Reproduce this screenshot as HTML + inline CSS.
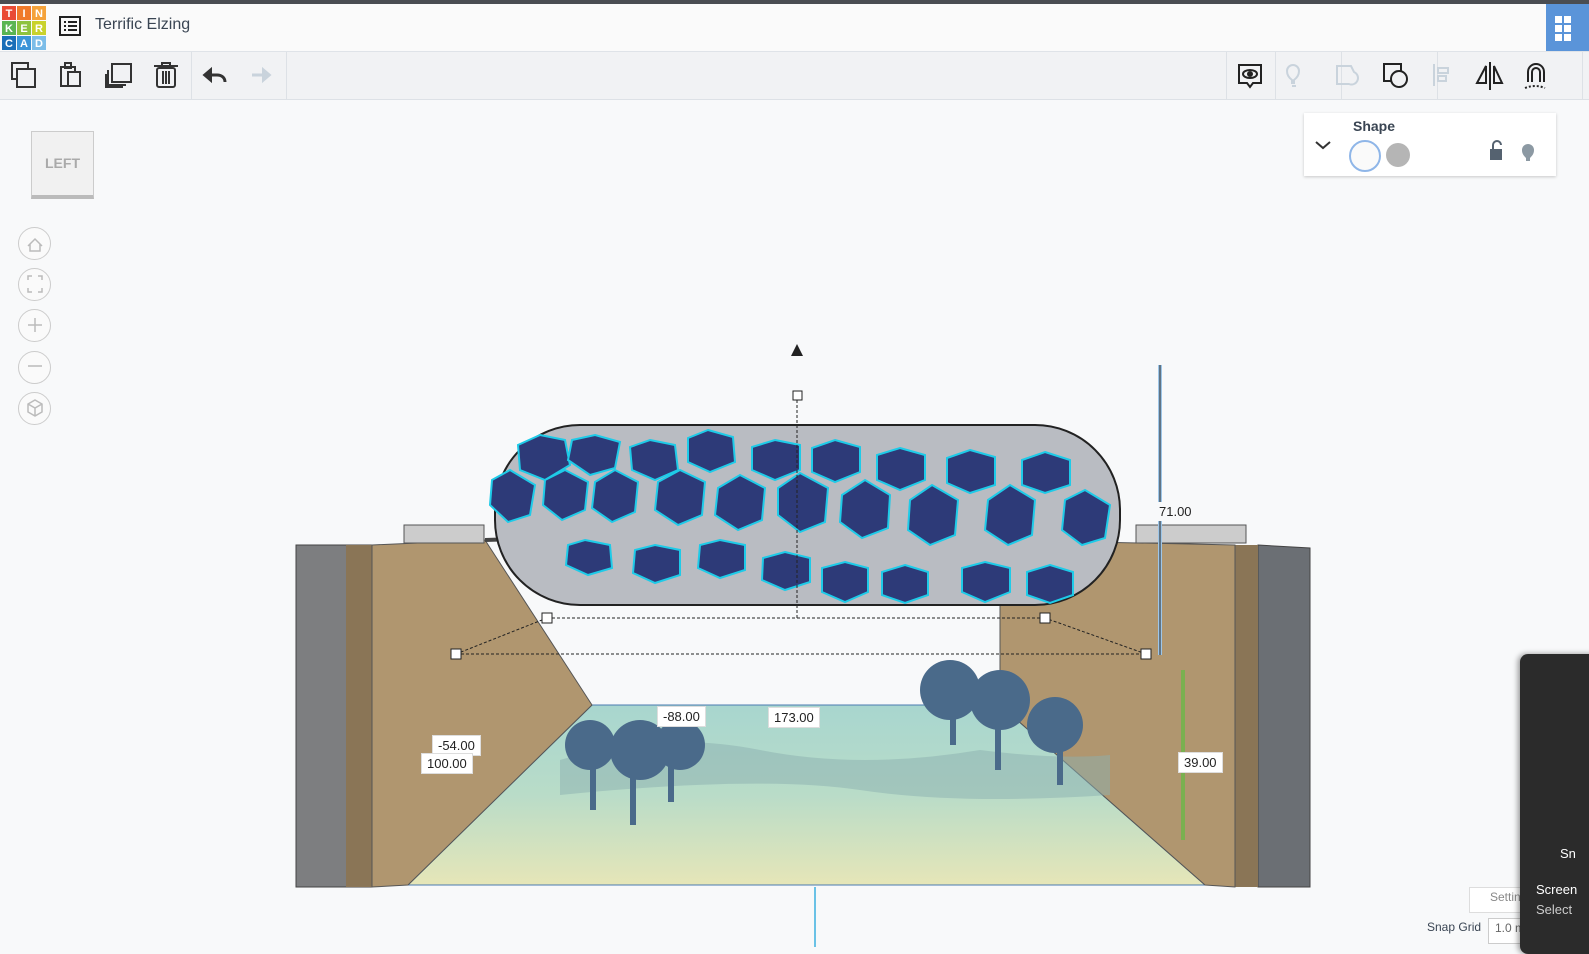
<!DOCTYPE html>
<html><head><meta charset="utf-8"><style>
body{margin:0;width:1589px;height:947px;overflow:hidden;background:#f8f9fa;font-family:"Liberation Sans",sans-serif;position:relative}
.top{position:absolute;left:0;top:0;width:1589px;height:4px;background:#4a4d52}
.hdr{position:absolute;top:4px;left:0;width:1589px;height:47px;background:#fafafa;border-bottom:2px solid #dfe3e8}
.tb{position:absolute;top:52px;left:0;width:1589px;height:47px;background:#f1f2f4;border-bottom:1px solid #dde1e6}
.sep{position:absolute;top:52px;width:1px;height:47px;background:#dde1e6}
.lbl{position:absolute;background:#fff;border:1px solid #ddd;font-size:13px;color:#222;padding:2px 5px}
.nav{position:absolute;left:18px;width:31px;height:31px;border:1.5px solid #ccc;border-radius:50%;background:#fafafa}
</style></head><body>
<div class="top"></div>
<div class="hdr"></div>
<svg style="position:absolute;left:2px;top:6px" width="44" height="44">
<rect x="0" y="0" width="14" height="14" fill="#e94b35"/><rect x="15" y="0" width="14" height="14" fill="#f07a2a"/><rect x="30" y="0" width="14" height="14" fill="#f5a23a"/>
<rect x="0" y="15" width="14" height="14" fill="#5ab552"/><rect x="15" y="15" width="14" height="14" fill="#8ec33f"/><rect x="30" y="15" width="14" height="14" fill="#c9d22c"/>
<rect x="0" y="30" width="14" height="14" fill="#1a6fb8"/><rect x="15" y="30" width="14" height="14" fill="#3b95d8"/><rect x="30" y="30" width="14" height="14" fill="#7cbde8"/>
<g font-size="11" fill="#fff" font-weight="bold" text-anchor="middle"><text x="7" y="11">T</text><text x="22" y="11">I</text><text x="37" y="11">N</text><text x="7" y="26">K</text><text x="22" y="26">E</text><text x="37" y="26">R</text><text x="7" y="41">C</text><text x="22" y="41">A</text><text x="37" y="41">D</text></g></svg>
<svg style="position:absolute;left:59px;top:16px" width="22" height="20"><rect x="1" y="1" width="20" height="18" fill="none" stroke="#222" stroke-width="2"/><g stroke="#222" stroke-width="2"><line x1="5" y1="6" x2="7" y2="6"/><line x1="9" y1="6" x2="18" y2="6"/><line x1="5" y1="10" x2="7" y2="10"/><line x1="9" y1="10" x2="18" y2="10"/><line x1="5" y1="14" x2="7" y2="14"/><line x1="9" y1="14" x2="18" y2="14"/></g></svg>
<div style="position:absolute;left:95px;top:16px;font-size:16px;color:#3a4553">Terrific Elzing</div>
<div style="position:absolute;left:1546px;top:4px;width:43px;height:47px;background:#5a94d9"></div>
<svg style="position:absolute;left:1555px;top:16px" width="34" height="26" fill="#fff"><rect x="0" y="0" width="7" height="7"/><rect x="9" y="0" width="7" height="7"/><rect x="0" y="9" width="7" height="7"/><rect x="9" y="9" width="7" height="7"/><rect x="0" y="18" width="7" height="7"/><rect x="9" y="18" width="7" height="7"/></svg>
<div class="tb"></div>
<div class="sep" style="left:191px"></div><div class="sep" style="left:286px"></div>
<div class="sep" style="left:1226px"></div><div class="sep" style="left:1275px"></div><div class="sep" style="left:1341px"></div><div class="sep" style="left:1437px"></div><div class="sep" style="left:1582px"></div>
<svg style="position:absolute;left:0;top:52px" width="300" height="47" fill="none" stroke="#333" stroke-width="2">
<rect x="12" y="11" width="16" height="16"/><rect x="17" y="17" width="18" height="18" fill="#f1f2f4"/>
<rect x="61" y="15" width="14" height="19"/><rect x="68" y="20" width="12" height="14" fill="#f1f2f4"/><rect x="65" y="11" width="6" height="5"/>
<rect x="112" y="12" width="19" height="18"/><path d="M108 18v15h18M106 22v13h17"/>
<rect x="157" y="16" width="18" height="19" rx="2"/><path d="M154 14h24M162 14v-3h8v3M163 19v13M166 19v13M169 19v13"/>
<path d="M206 23h11c5 0 8 3 8 7" stroke-width="3"/><path d="M204 23l7-6v12z" fill="#333"/>
<path d="M263 23h-11" stroke="#c9d3dc" stroke-width="3"/><path d="M270 23l-7-6v12z" fill="#c9d3dc" stroke="#c9d3dc"/>
</svg>
<svg style="position:absolute;left:1226px;top:52px" width="363" height="47" fill="none" stroke="#222" stroke-width="2">
<path d="M13 13h22v18h-8l-3 4-3-4h-8z"/><ellipse cx="24" cy="22" rx="7" ry="4"/><circle cx="24" cy="22" r="2" fill="#222"/>
<path d="M66 31v-3c-4-3-5-6-5-9a6 6 0 0 1 12 0c0 3-1 6-5 9v3zM66 34h4" stroke="#c9d3dc"/>
<path d="M111 14h14l3 6a6 6 0 0 1-5 12h-12z" stroke="#c9d3dc"/>
<rect x="158" y="12" width="17" height="17"/><circle cx="173" cy="27" r="8" fill="#f1f2f4"/>
<path d="M208 12v22M212 16h10v5h-10zM212 24h8v5h-8z" stroke="#c9d3dc"/>
<path d="M264 10v28M260 14l-9 17h9zM268 14l8 17h-8z"/>
<path d="M302 30v-10a8 8 0 0 1 16 0v10M306 30v-10a4 4 0 0 1 8 0v10"/><path d="M299 36q10-4 20 0" stroke-dasharray="2 2"/>
</svg>
<div style="position:absolute;left:1304px;top:113px;width:252px;height:63px;background:#fff;box-shadow:0 1px 3px rgba(0,0,0,.2)"></div>
<div style="position:absolute;left:1353px;top:118px;font-size:14px;color:#3a4553;font-weight:bold">Shape</div>
<svg style="position:absolute;left:1310px;top:135px" width="240" height="40"><path d="M6 7l7 6 7-6" fill="none" stroke="#333" stroke-width="2"/>
<circle cx="55" cy="21" r="15" fill="#fafafa" stroke="#8fb6e8" stroke-width="2"/><circle cx="88" cy="20" r="12" fill="#b5b5b5"/>
<rect x="180" y="14" width="12" height="11" fill="#556270"/><path d="M183 14v-4a4 4 0 0 1 8 0" fill="none" stroke="#556270" stroke-width="2"/>
<path d="M216 23c-3-3-4-5-4-8a6 6 0 0 1 12 0c0 3-1 5-4 8v3h-4z" fill="#8c99a3"/></svg>
<div style="position:absolute;left:31px;top:131px;width:61px;height:63px;background:#f1f1f1;border:1px solid #ccc;border-bottom:4px solid #bbb;font-size:14px;color:#aaa;text-align:center;line-height:62px;font-weight:bold">LEFT</div>
<div class="nav" style="top:227px"></div><div class="nav" style="top:268px"></div><div class="nav" style="top:309px"></div><div class="nav" style="top:351px"></div><div class="nav" style="top:392px"></div>
<svg style="position:absolute;left:18px;top:227px" width="34" height="200" fill="none" stroke="#bbb" stroke-width="1.5">
<path d="M10 19l7-7 7 7M12 17v7h10v-7"/><path d="M10 53v-4h4M24 53v-4h-4M10 61v4h4M24 61v4h-4"/><path d="M10 98h14M17 91v14"/><path d="M10 139h14"/><path d="M17 173l7 4v8l-7 4-7-4v-8zM10 177l7 4 7-4M17 181v8"/></svg>
<svg style="position:absolute;left:0;top:0" width="1589" height="947">
<defs><linearGradient id="fl" x1="0" y1="0" x2="0" y2="1"><stop offset="0" stop-color="#a8d6cf"/><stop offset=".5" stop-color="#b9dcc8"/><stop offset="1" stop-color="#e6e6b8"/></linearGradient></defs>
<polygon points="296,545 372,545 372,887 296,887" fill="#7d7e80" stroke="#444"/>
<polygon points="346,545 372,545 372,887 346,887" fill="#8a7556"/>
<polygon points="408,885 592,705 1000,705 1205,885" fill="url(#fl)" stroke="#4a7ab0"/>
<polygon points="372,545 485,540 592,705 408,885 372,887" fill="#b0966f" stroke="#555"/>
<polygon points="1258,545 1310,548 1310,887 1258,887" fill="#6b6f74" stroke="#444"/>
<polygon points="1235,545 1258,545 1258,887 1235,887" fill="#8a7556"/>
<polygon points="1000,540 1235,545 1235,887 1205,885 1000,705" fill="#b0966f" stroke="#555"/>
<path d="M560 760q100-30 200-10t220 0q80 10 130 5v40q-150 10-250-5t-300 5z" fill="#8bb0b0" opacity=".5"/>
<g fill="#4a6a8a"><circle cx="590" cy="745" r="25"/><circle cx="640" cy="750" r="30"/><circle cx="680" cy="745" r="25"/><circle cx="950" cy="690" r="30"/><circle cx="1000" cy="700" r="30"/><circle cx="1055" cy="725" r="28"/>
<rect x="590" y="760" width="6" height="50"/><rect x="630" y="760" width="6" height="65"/><rect x="668" y="760" width="6" height="42"/><rect x="950" y="700" width="6" height="45"/><rect x="995" y="710" width="6" height="60"/><rect x="1057" y="730" width="6" height="55"/></g>
<rect x="404" y="525" width="80" height="18" fill="#ccc" stroke="#555"/><rect x="1136" y="525" width="110" height="18" fill="#ccc" stroke="#555"/>
<path d="M485 540q300-10 620-5" stroke="#444" stroke-width="4" fill="none"/>
<rect x="495" y="425" width="625" height="180" rx="85" fill="#b9bcc2" stroke="#222" stroke-width="2"/>
<g fill="#2d3a78" stroke="#1ecbe8" stroke-width="2">
<polygon points="540,435 565,440 570,465 545,480 520,470 518,445"/><polygon points="595,435 620,442 615,468 590,475 568,460 572,440"/><polygon points="650,440 675,445 678,470 655,480 632,470 630,447"/><polygon points="708,430 733,437 735,462 710,472 688,462 688,438"/><polygon points="775,440 800,445 800,470 775,480 752,470 752,447"/><polygon points="835,440 860,447 860,472 835,482 812,472 812,448"/><polygon points="900,448 925,455 925,480 900,490 877,480 877,455"/><polygon points="970,450 995,457 995,485 970,493 947,483 947,458"/><polygon points="1045,452 1070,460 1070,485 1045,493 1022,485 1022,460"/>
<polygon points="510,470 535,485 530,515 508,522 490,505 492,480"/><polygon points="565,470 588,482 585,510 562,520 543,505 545,480"/><polygon points="615,470 638,482 635,512 612,522 592,508 595,482"/><polygon points="680,470 705,482 702,515 678,525 655,510 658,482"/><polygon points="740,475 765,488 762,520 738,530 715,515 718,488"/><polygon points="800,473 828,488 825,522 800,532 778,515 778,488"/><polygon points="865,480 890,495 888,528 862,538 840,522 842,495"/><polygon points="932,485 958,500 955,535 930,545 908,530 910,500"/><polygon points="1010,485 1035,500 1032,535 1008,545 985,530 988,500"/><polygon points="1085,490 1110,505 1105,538 1082,545 1062,530 1065,500"/>
<polygon points="585,540 610,545 612,568 588,575 566,565 568,545"/><polygon points="655,545 680,550 680,575 655,583 633,573 635,550"/><polygon points="720,540 745,545 745,570 720,578 698,568 700,545"/><polygon points="785,552 810,558 810,582 785,590 762,580 763,558"/><polygon points="845,562 868,568 868,592 845,602 822,592 822,568"/><polygon points="905,565 928,572 928,595 905,603 882,595 882,572"/><polygon points="985,562 1010,568 1010,592 985,602 962,592 962,568"/><polygon points="1050,565 1073,572 1073,595 1050,603 1027,595 1027,572"/></g>
<g stroke="#222" stroke-dasharray="3 2" fill="none"><path d="M456 654h690M547 618h498M456 654l91-36M1146 654l-101-36"/><path d="M797 400v220"/></g>
<g fill="#fff" stroke="#222"><rect x="451" y="649" width="10" height="10"/><rect x="1141" y="649" width="10" height="10"/><rect x="542" y="613" width="10" height="10"/><rect x="1040" y="613" width="10" height="10"/><rect x="793" y="391" width="9" height="9"/></g>
<path d="M797 344l-6 12h12z" fill="#222"/>
<path d="M1160 365v290" stroke="#9ec6e8" stroke-width="4"/><path d="M1160 365v290" stroke="#222"/>
<path d="M1183 670v170" stroke="#7ab050" stroke-width="4"/>
<path d="M815 887v60" stroke="#3ab0e0" stroke-width="1.5"/>
</svg>
<div class="lbl" style="left:1154px;top:502px;border:none;background:#f8f9fa">71.00</div>
<div class="lbl" style="left:657px;top:706px">-88.00</div>
<div class="lbl" style="left:768px;top:707px">173.00</div>
<div class="lbl" style="left:432px;top:735px">-54.00</div>
<div class="lbl" style="left:421px;top:753px">100.00</div>
<div class="lbl" style="left:1178px;top:752px">39.00</div>
<div style="position:absolute;left:1469px;top:887px;width:60px;height:20px;border:1px solid #ddd;background:#fff;font-size:12px;color:#888;padding:2px 20px">Settings</div>
<div style="position:absolute;left:1427px;top:920px;font-size:12px;color:#3a4553">Snap Grid</div>
<div style="position:absolute;left:1488px;top:918px;width:50px;height:20px;border:1px solid #ccc;background:#fff;font-size:12px;color:#666;padding:2px 6px">1.0 mm</div>
<div style="position:absolute;left:1520px;top:654px;width:80px;height:300px;background:#2b2b2b;border-radius:8px;box-shadow:-2px 0 6px rgba(0,0,0,.4);color:#fff;font-size:13px;overflow:hidden">
<div style="position:absolute;left:40px;top:192px">Sn</div><div style="position:absolute;left:16px;top:228px">Screen</div><div style="position:absolute;left:16px;top:248px;color:#ccc">Select</div></div>
</body></html>
